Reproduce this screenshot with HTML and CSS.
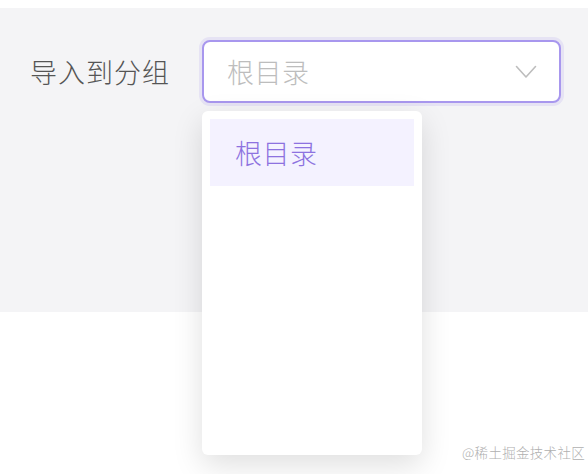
FILE: index.html
```html
<!DOCTYPE html>
<html lang="zh">
<head>
<meta charset="utf-8">
<link rel="stylesheet" href="styles.css">
</head>
<body>
<div class="page">
  <div class="panel">
    <div class="form-row">
      <label class="label">导入到分组</label>
      <div class="select-wrap">
        <div class="select">
          <span class="placeholder">根目录</span>
          <svg class="chevron" width="22" height="14" viewBox="0 0 22 14"><path d="M1.5 1.5 L11 12 L20.5 1.5" fill="none" stroke="#bdbdbd" stroke-width="1.6" stroke-linecap="round" stroke-linejoin="round"/></svg>
        </div>
        <div class="dropdown">
          <div class="option active">根目录</div>
        </div>
      </div>
    </div>
  </div>
  <div class="watermark">@稀土掘金技术社区</div>
</div>
</body>
</html>
```
FILE: styles.css
```css
html, body {
  margin: 0;
  padding: 0;
  background: #ffffff;
}
body {
  font-family: "Noto Sans CJK SC", "Noto Sans", sans-serif;
  font-weight: 300;
  width: 588px;
  height: 474px;
  overflow: hidden;
}
.page {
  position: relative;
  width: 588px;
  height: 474px;
  padding-top: 8px;
  box-sizing: border-box;
}
.panel {
  background: #f4f4f6;
  height: 304px;
  padding: 32px 0 0 30px;
  box-sizing: border-box;
}
.form-row {
  display: flex;
  align-items: center;
  gap: 32px;
}
.label {
  font-size: 27px;
  color: #555555;
  line-height: 62px;
  letter-spacing: 1px;
}
.select-wrap {
  position: relative;
}
.select {
  width: 359px;
  height: 63px;
  box-sizing: border-box;
  border: 2px solid #a897ee;
  border-radius: 8px;
  background: #ffffff;
  box-shadow: 0 0 0 3px rgba(168, 151, 238, 0.18);
  display: flex;
  align-items: center;
  justify-content: space-between;
  padding: 0 22px 0 23px;
}
.placeholder {
  font-size: 27px;
  color: #bdbdbd;
  letter-spacing: 0.5px;
}
.chevron {
  display: block;
}
.dropdown {
  position: absolute;
  left: 0;
  top: 71px;
  width: 220px;
  height: 344px;
  background: #ffffff;
  border-radius: 6px;
  box-shadow: 0 10px 30px rgba(0, 0, 0, 0.13);
  padding: 8px;
  box-sizing: border-box;
}
.option {
  height: 67px;
  background: #f4f2ff;
  color: #8d72e0;
  font-size: 27px;
  display: flex;
  align-items: center;
  padding-left: 25px;
  letter-spacing: 0.5px;
}
.watermark {
  position: absolute;
  right: 3px;
  bottom: 12px;
  font-size: 13.5px;
  letter-spacing: 0.3px;
  color: #b0b0b0;
  text-shadow: 0 0 2px #fff;
}
```
